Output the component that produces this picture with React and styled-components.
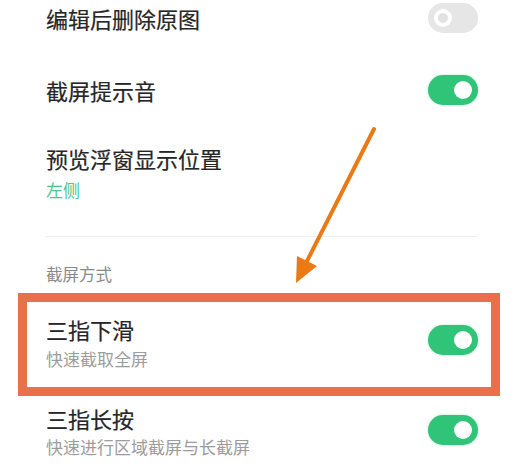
import React from 'react';
import styled, { createGlobalStyle } from 'styled-components';

const GlobalStyle = createGlobalStyle`
  html, body {
    margin: 0;
    padding: 0;
    background: #ffffff;
    overflow: hidden;
  }
  body {
    font-family: "Noto Sans CJK SC", "Noto Sans", sans-serif;
  }
`;

const Page = styled.div`
  position: relative;
  width: 517px;
  height: 468px;
  overflow: hidden;
  background: #fff;
`;

const List = styled.div`
  display: flex;
  flex-direction: column;
  padding: 0 39px 0 46px;
  margin-top: -18px;
`;

const Row = styled.div`
  display: flex;
  align-items: ${(p) => p.$align || 'center'};
  justify-content: space-between;
  min-height: ${(p) => p.$height || 72}px;
  box-sizing: border-box;
  padding: ${(p) => p.$pad || '0'};
  border-bottom: ${(p) => (p.$divider ? '1px solid #efefef' : 'none')};
`;

const Texts = styled.div`
  display: flex;
  flex-direction: column;
  gap: ${(p) => p.$gap || 4}px;
`;

const Title = styled.div`
  font-size: 22px;
  line-height: 30px;
  color: #262626;
  -webkit-text-stroke: 0.2px #262626;
`;

const Sub = styled.div`
  font-size: 17px;
  line-height: 24px;
  color: ${(p) => (p.$accent ? '#4fc58d' : '#9c9c9c')};
`;

const SectionHeader = styled.div`
  font-size: 16.5px;
  line-height: 22px;
  color: #8a8a8a;
  padding: 26px 0 8px;
`;

const Highlight = styled.div`
  margin: 0 -22px 0 -28px;
  border: 9px solid #e8704a;
  padding: 12px 13px 16px 19px;
  display: flex;
  align-items: center;
  justify-content: space-between;
`;

const Switch = styled.div`
  position: relative;
  width: 50px;
  height: 30px;
  border-radius: 15px;
  flex-shrink: 0;
  margin-top: ${(p) => p.$offset || 0}px;
  background: ${(p) => (p.$on ? '#2fc477' : '#e6e6e6')};
  box-shadow: ${(p) => (p.$on ? '0 0 3px rgba(47,196,119,0.35)' : 'none')};

  &::after {
    content: '';
    position: absolute;
    top: 6px;
    left: ${(p) => (p.$on ? '26px' : '6px')};
    width: 18px;
    height: 18px;
    border-radius: 50%;
    box-sizing: border-box;
    background: ${(p) => (p.$on ? '#ffffff' : '#e2e2e2')};
    border: ${(p) => (p.$on ? 'none' : '4px solid #ffffff')};
  }
`;

const Arrow = styled.svg`
  position: absolute;
  left: 0;
  top: 0;
  pointer-events: none;
`;

export default function App() {
  return (
    <Page>
      <GlobalStyle />
      <List>
        <Row>
          <Title>编辑后删除原图</Title>
          <Switch />
        </Row>
        <Row>
          <Title>截屏提示音</Title>
          <Switch $on />
        </Row>
        <Row $height={111} $pad="17px 0 0" $align="flex-start" $divider>
          <Texts $gap={5}>
            <Title>预览浮窗显示位置</Title>
            <Sub $accent>左侧</Sub>
          </Texts>
        </Row>
        <SectionHeader>截屏方式</SectionHeader>
        <Highlight>
          <Texts $gap={3}>
            <Title>三指下滑</Title>
            <Sub>快速截取全屏</Sub>
          </Texts>
          <Switch $on $offset={-6} />
        </Highlight>
        <Row $height={64} $pad="6px 0 0">
          <Texts $gap={2}>
            <Title>三指长按</Title>
            <Sub>快速进行区域截屏与长截屏</Sub>
          </Texts>
          <Switch $on $offset={-2} />
        </Row>
      </List>
      <Arrow width="517" height="468" viewBox="0 0 517 468">
        <line x1="374" y1="129" x2="306" y2="263" stroke="#e97a14" strokeWidth="4" strokeLinecap="round" />
        <polygon points="296,283 297,256 317,266" fill="#e97a14" />
      </Arrow>
    </Page>
  );
}
